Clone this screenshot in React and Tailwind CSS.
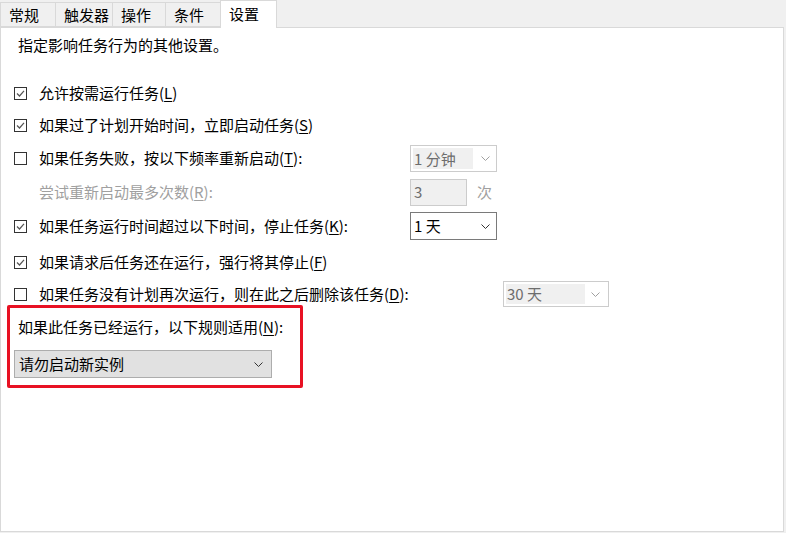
import React from 'react';

const font = { fontFamily: '"Microsoft YaHei", "Noto Sans CJK SC", "Noto Sans", sans-serif' };

const Check = ({ checked }) => (
  <svg width="13" height="13" viewBox="0 0 13 13" className="shrink-0">
    <rect x="0.5" y="0.5" width="12" height="12" fill="#fff" stroke="#333" />
    {checked && <path d="M3 6.5 L5.5 9 L10 3.8" fill="none" stroke="#555" strokeWidth="1.2" />}
  </svg>
);

const Chevron = ({ color }) => (
  <svg width="9" height="5" viewBox="0 0 9 5">
    <path d="M0.5 0.5 L4.5 4.5 L8.5 0.5" fill="none" stroke={color} strokeWidth="1" />
  </svg>
);

const U = ({ children }) => <span className="underline underline-offset-2">{children}</span>;

const Tab = ({ label, active, width }) =>
  active ? (
    <div className="h-[28px] bg-white border border-b-0 border-[#d9d9d9] pl-[8px] text-black text-[15px] leading-[26px] relative z-10" style={{ width }}>
      {label}
    </div>
  ) : (
    <div className="mt-[2px] h-[25px] bg-[#f0f0f0] border border-[#d9d9d9] -mr-px pl-[8px] text-black text-[15px] leading-[24px]" style={{ width }}>
      {label}
    </div>
  );

export default function App() {
  return (
    <div className="w-[786px] h-[533px] bg-[#f0f0f0] overflow-hidden flex flex-col" style={font}>
      <div className="flex h-[27px] items-start">
        <Tab label="常规" width={56} />
        <Tab label="触发器" width={58} />
        <Tab label="操作" width={54} />
        <Tab label="条件" width={56} />
        <Tab label="设置" active width={57} />
      </div>
      <div className="w-[784px] h-[505px] bg-white border border-[#d9d9d9] text-[15px] text-black">
        <div className="ml-[17px] mt-[7px] h-[20px] leading-[20px]">指定影响任务行为的其他设置。</div>

        <div className="mt-[28px] h-[20px] flex items-center pl-[13px] gap-[12px]">
          <Check checked />
          <span>允许按需运行任务(<U>L</U>)</span>
        </div>

        <div className="mt-[12px] h-[20px] flex items-center pl-[13px] gap-[12px]">
          <Check checked />
          <span>如果过了计划开始时间，立即启动任务(<U>S</U>)</span>
        </div>

        <div className="mt-[9px] h-[28px] flex items-center pl-[13px]">
          <Check />
          <span className="ml-[12px] w-[371px]">如果任务失败，按以下频率重新启动(<U>T</U>):</span>
          <div className="w-[87px] h-[27px] border border-[#cccccc] bg-white flex items-center pl-[2px] pr-[6px] justify-between">
            <span className="bg-[#f0f0f0] w-[60px] h-[21px] leading-[21px] pl-[1px] text-[#6d6d6d]">1 分钟</span>
            <Chevron color="#a0a0a0" />
          </div>
        </div>

        <div className="mt-[6px] h-[29px] flex items-center">
          <span className="ml-[38px] w-[371px] text-[#a0a0a0]">尝试重新启动最多次数(<U>R</U>):</span>
          <div className="w-[57px] h-[27px] border border-[#cccccc] bg-[#f0f0f0] flex items-center pl-[3px] text-[#6d6d6d]">3</div>
          <span className="ml-[10px] text-[#a0a0a0]">次</span>
        </div>

        <div className="mt-[5px] h-[28px] flex items-center pl-[13px]">
          <Check checked />
          <span className="ml-[12px] w-[371px]">如果任务运行时间超过以下时间，停止任务(<U>K</U>):</span>
          <div className="w-[87px] h-[28px] border border-[#7a7a7a] bg-white flex items-center pl-[3px] pr-[6px] justify-between">
            <span>1 天</span>
            <Chevron color="#333" />
          </div>
        </div>

        <div className="mt-[12px] h-[20px] flex items-center pl-[13px] gap-[12px]">
          <Check checked />
          <span>如果请求后任务还在运行，强行将其停止(<U>F</U>)</span>
        </div>

        <div className="mt-[9px] h-[26px] flex items-center pl-[13px]">
          <Check />
          <span className="ml-[12px] w-[464px]">如果任务没有计划再次运行，则在此之后删除该任务(<U>D</U>):</span>
          <div className="w-[106px] h-[26px] border border-[#cccccc] bg-white flex items-center pl-[2px] pr-[8px] justify-between">
            <span className="bg-[#f0f0f0] w-[79px] h-[20px] leading-[20px] pl-[1px] text-[#6d6d6d]">30 天</span>
            <Chevron color="#a0a0a0" />
          </div>
        </div>

        <div className="-mt-[2px] ml-[6px] w-[296px] h-[83px] border-[3px] border-[#e81123] rounded-[2px]">
          <div className="mt-[9px] ml-[8px] h-[20px] leading-[20px]">如果此任务已经运行，以下规则适用(<U>N</U>):</div>
          <div className="mt-[13px] ml-[4px] w-[258px] h-[28px] border border-[#adadad] bg-[#e1e1e1] flex items-center justify-between pl-[4px] pr-[8px]">
            <span>请勿启动新实例</span>
            <Chevron color="#333" />
          </div>
        </div>
      </div>
    </div>
  );
}
